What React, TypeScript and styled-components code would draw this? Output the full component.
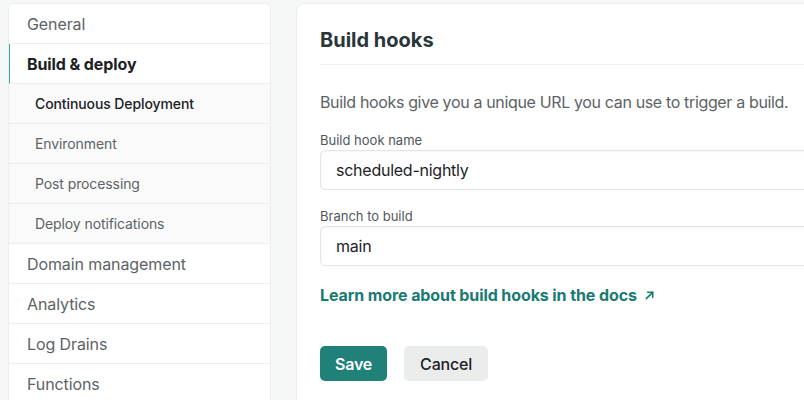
import styled, { createGlobalStyle } from 'styled-components'

const GlobalStyle = createGlobalStyle`
  html, body {
    margin: 0;
    padding: 0;
    background: #f6f8f8;
    font-family: Inter, "Noto Sans", "Liberation Sans", sans-serif;
    -webkit-font-smoothing: antialiased;
    overflow: hidden;
  }
`

const Page = styled.div`
  display: flex;
  align-items: flex-start;
  gap: 25px;
  padding: 3px 0 0 8px;
  width: 1100px;
  height: 400px;
  overflow: hidden;
`

const Sidebar = styled.nav`
  width: 261px;
  background: #fff;
  border: 1px solid #eceeef;
  border-radius: 6px;
  overflow: hidden;
  flex-shrink: 0;
`

const NavItem = styled.div<{ $active?: boolean; $sub?: boolean; $current?: boolean }>`
  height: 40px;
  box-sizing: border-box;
  display: flex;
  align-items: center;
  padding-left: ${(p) => (p.$sub ? 25 : 17)}px;
  border-bottom: 1px solid #ededed;
  border-left: 2px solid ${(p) => (p.$active ? '#3ba79d' : 'transparent')};
  margin-left: -1px;
  background: ${(p) => (p.$sub ? '#fafafa' : '#fff')};
  font-size: ${(p) => (p.$sub ? 14 : 16)}px;
  letter-spacing: -0.1px;
  font-weight: ${(p) => (p.$active ? 700 : p.$current ? 500 : 400)};
  color: ${(p) => (p.$active || p.$current ? '#1b2124' : '#5c6366')};
  white-space: nowrap;
`

const Card = styled.section`
  width: 560px;
  min-height: 420px;
  background: #fff;
  border: 1px solid #eceeef;
  border-radius: 8px;
  padding: 22px 24px 0 23px;
  box-sizing: border-box;
  flex-shrink: 0;
`

const Title = styled.h2`
  margin: 0 -30px 0 0;
  padding-bottom: 10px;
  font-size: 20px;
  line-height: 28px;
  font-weight: 700;
  color: #2a3539;
  border-bottom: 1px solid #eef0f0;
`

const Description = styled.p`
  margin: 25px 0 17px;
  font-size: 16px;
  line-height: 24px;
  letter-spacing: -0.35px;
  color: #5b6366;
  white-space: nowrap;
`

const Field = styled.div`
  display: flex;
  flex-direction: column;
  margin: 0 -60px 17px 0;
`

const Label = styled.label`
  font-size: 13px;
  line-height: 18px;
  color: #50575a;
  margin-bottom: 1px;
`

const Input = styled.div`
  height: 40px;
  box-sizing: border-box;
  display: flex;
  align-items: center;
  padding-left: 15px;
  border: 1px solid #e2e4e5;
  border-radius: 5px;
  box-shadow: inset 0 1px 2px rgba(0, 0, 0, 0.04);
  font-size: 16px;
  letter-spacing: -0.25px;
  color: #1d2225;
`

const DocsLink = styled.a`
  display: inline-flex;
  align-items: center;
  gap: 7px;
  font-size: 16px;
  line-height: 24px;
  letter-spacing: -0.1px;
  font-weight: 700;
  color: #1a7a72;
  text-decoration: none;
`

const Actions = styled.div`
  display: flex;
  gap: 17px;
  margin-top: 39px;
`

const Button = styled.button<{ $primary?: boolean }>`
  height: 35px;
  padding: 0 ${(p) => (p.$primary ? 15 : 16)}px;
  border: none;
  border-radius: 5px;
  font-family: inherit;
  font-size: 16px;
  letter-spacing: -0.2px;
  font-weight: ${(p) => (p.$primary ? 600 : 500)};
  background: ${(p) => (p.$primary ? '#1f8178' : '#ebecec')};
  color: ${(p) => (p.$primary ? '#fff' : '#1d2225')};
`

const navItems = [
  { label: 'General' },
  { label: 'Build & deploy', active: true },
  { label: 'Continuous Deployment', sub: true, current: true },
  { label: 'Environment', sub: true },
  { label: 'Post processing', sub: true },
  { label: 'Deploy notifications', sub: true },
  { label: 'Domain management' },
  { label: 'Analytics' },
  { label: 'Log Drains' },
  { label: 'Functions' },
]

const ArrowUpRight = () => (
  <svg width="11" height="11" viewBox="0 0 12 12" fill="none" stroke="currentColor" strokeWidth="1.8" strokeLinecap="round" strokeLinejoin="round">
    <path d="M2.5 9.5L9.5 2.5" />
    <path d="M4 2.5h5.5V8" />
  </svg>
)

const App = () => {
  return (
    <>
      <GlobalStyle />
      <Page>
        <Sidebar>
          {navItems.map((item) => (
            <NavItem key={item.label} $active={item.active} $sub={item.sub} $current={item.current}>
              {item.label}
            </NavItem>
          ))}
        </Sidebar>
        <Card>
          <Title>Build hooks</Title>
          <Description>Build hooks give you a unique URL you can use to trigger a build.</Description>
          <Field>
            <Label>Build hook name</Label>
            <Input>scheduled-nightly</Input>
          </Field>
          <Field>
            <Label>Branch to build</Label>
            <Input>main</Input>
          </Field>
          <DocsLink href="#">
            Learn more about build hooks in the docs <ArrowUpRight />
          </DocsLink>
          <Actions>
            <Button $primary>Save</Button>
            <Button>Cancel</Button>
          </Actions>
        </Card>
      </Page>
    </>
  )
}

export default App
